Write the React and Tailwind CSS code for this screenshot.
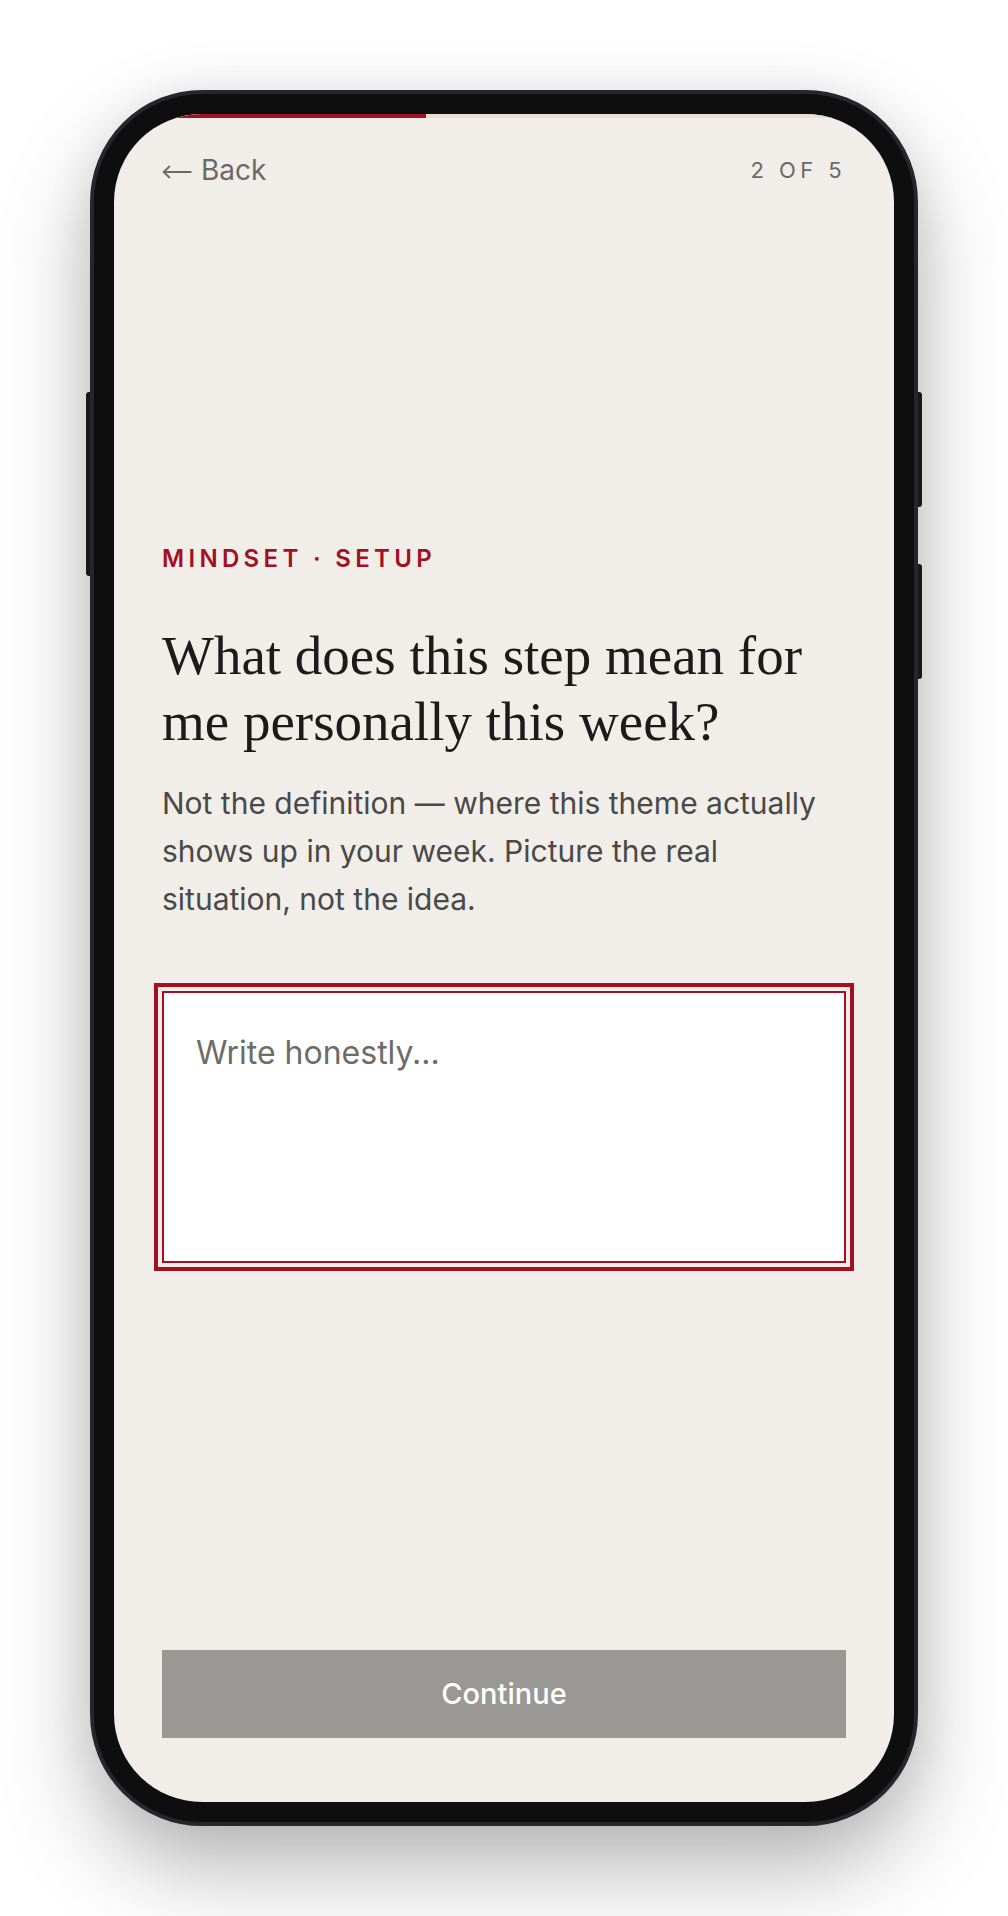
import React from 'react'

export default function App(){
  return (
    <div className="min-h-screen bg-white flex justify-center pt-[90px] pb-[90px] font-['Inter',_'Liberation_Sans',_sans-serif]">
      <div className="relative w-[828px] h-[1736px] rounded-[112px] bg-[#0e0e0f] border-4 border-[#26262b] p-5 shadow-[0_44px_90px_rgba(0,0,0,0.28),0_0_50px_rgba(0,0,0,0.07)]">
        {/* side buttons */}
        <div className="absolute left-[-8px] top-[298px] w-[4px] h-[184px] rounded-l-[3px] bg-[#18181b]" />
        <div className="absolute right-[-8px] top-[298px] w-[4px] h-[115px] rounded-r-[3px] bg-[#18181b]" />
        <div className="absolute right-[-8px] top-[470px] w-[4px] h-[115px] rounded-r-[3px] bg-[#18181b]" />

        <div className="h-full rounded-[88px] bg-[#f1eee9] overflow-hidden flex flex-col">
          <div className="h-1 w-full bg-[#e6dfd6] flex">
            <div className="h-full w-[40%] bg-[#a4101f]" />
          </div>

          <div className="flex-1 flex flex-col px-[48px]">
            <div className="flex items-center justify-between pt-[31px]">
              <button className="inline-flex items-center gap-[9px] text-[28px] leading-[42px] text-[#6b6966]">
                <svg width="30" height="14" viewBox="0 0 30 14" fill="none" stroke="currentColor" strokeWidth="1.8" className="mt-[3px]">
                  <path d="M29.5 7H1.5" />
                  <path d="M8 1L1.6 7L8 13" strokeLinejoin="miter" />
                </svg>
                Back
              </button>
              <span className="text-[22px] leading-[33px] tracking-[0.2em] text-[#6b6966]">2 OF 5</span>
            </div>

            <div className="mt-[352px]">
              <div className="text-[24px] leading-8 font-semibold tracking-[0.18em] text-[#a4101f]">MINDSET · SETUP</div>
              <h1 className="mt-[48px] font-['Liberation_Serif',_serif] text-[55px] leading-[66px] text-[#1c1b1a]">
                What does this step mean for me personally this week?
              </h1>
              <p className="mt-[24px] text-[30px] leading-[48px] text-[#4a4947]">
                Not the definition — where this theme actually shows up in your week. Picture the real situation, not the idea.
              </p>
              <textarea
                placeholder="Write honestly..."
                className="mt-[68px] block w-full h-[272px] resize-none bg-white border-2 border-[#a4101f] ring-4 ring-[#a4101f] ring-offset-4 ring-offset-[#f1eee9] outline-none px-8 pt-[34px] pb-8 text-[32px] leading-[1.625] text-[#1c1b1a] placeholder:text-[#6e6c69]"
              />
            </div>

            <button className="mt-auto mb-[64px] h-[88px] w-full bg-[#9a9894] text-white text-[29px] font-medium">
              Continue
            </button>
          </div>
        </div>
      </div>
    </div>
  )
}
